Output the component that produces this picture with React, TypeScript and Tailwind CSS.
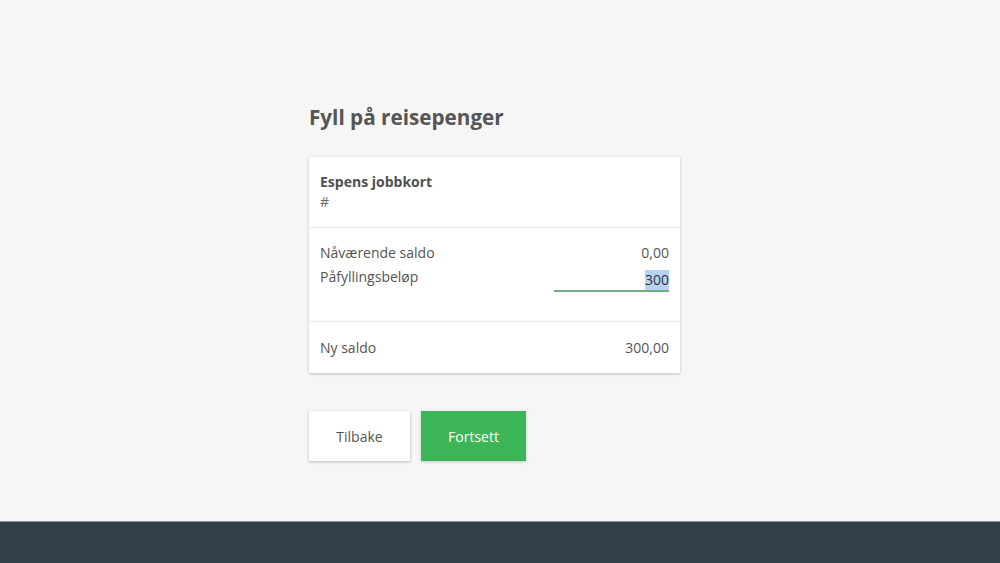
export default function App() {
  return (
    <div className="flex h-[563px] flex-col bg-[#f7f6f6] font-['Open_Sans',sans-serif] text-[#555]">
      <main className="flex-1">
        <div className="mx-auto w-[382px] pt-[101px]">
          <h1 className="text-[20.7px] font-bold leading-[32px] text-[#555]">Fyll på reisepenger</h1>

          {/* Card */}
          <div className="mt-[24px] w-[371px] bg-white shadow-[0_1px_3px_rgba(0,0,0,0.22)]">
            <div className="border-b border-[#ececec] px-[11px] pt-[15px] pb-[15px] text-[14px] leading-[20px]">
              <div className="font-bold text-[#505050]">Espens jobbkort</div>
              <div className="text-[#666]">#</div>
            </div>

            <div className="border-b border-[#ececec] px-[11px] pt-[15px] pb-[29px] text-[14px] leading-[20px]">
              <div className="flex justify-between">
                <span>Nåværende saldo</span>
                <span>0,00</span>
              </div>
              <div className="mt-[4px] flex justify-between">
                <span>Påfyllingsbeløp</span>
                <div className="mt-[3px] flex h-[22px] w-[115px] justify-end border-b-2 border-[#6fae80]">
                  <span className="bg-[#b5d3f2] leading-[20px] text-[#333]">300</span>
                </div>
              </div>
            </div>

            <div className="flex justify-between px-[11px] pt-[16px] pb-[15px] text-[14px] leading-[20px]">
              <span>Ny saldo</span>
              <span>300,00</span>
            </div>
          </div>

          {/* Buttons */}
          <div className="mt-[38px] flex gap-[11px]">
            <button className="h-[50px] w-[101px] bg-white text-[14px] text-[#555] shadow-[0_1px_3px_rgba(0,0,0,0.25)]">
              Tilbake
            </button>
            <button className="h-[50px] w-[105px] bg-[#3bb555] text-[14px] text-white shadow-[0_1px_3px_rgba(0,0,0,0.2)]">
              Fortsett
            </button>
          </div>
        </div>
      </main>
      <footer className="h-[42px] border-t border-[#8a8f9c] bg-[#333f48]"></footer>
    </div>
  );
}
